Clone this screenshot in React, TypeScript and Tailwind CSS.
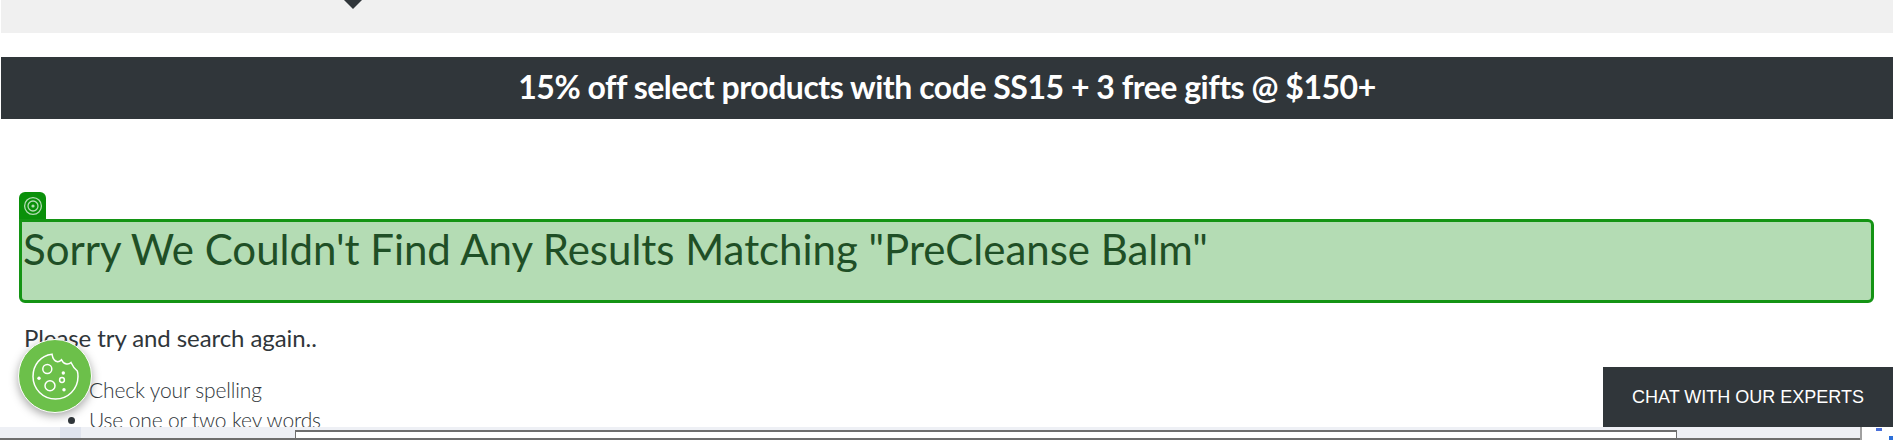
const CookieIcon = () => (
  <svg viewBox="0 0 54 54" className="w-[54px] h-[54px]" fill="none" stroke="white" strokeWidth="1.5">
    <path d="M24 5.2 C12.5 6.5 5 16 5 27.5 C5 40 15 50 27.5 50 C40 50 50 40 50 27.5 C50 25.5 49.8 23.6 49.3 22 Q45.5 19 43 13.5 Q41 15.5 38.5 15 Q35 14.5 33.5 10.8 Q31.5 13 29.5 12.8 Q25 12 24 5.2 Z" />
    <circle cx="19.3" cy="20" r="4.5" />
    <circle cx="22" cy="36.7" r="5" />
    <circle cx="34" cy="31" r="2.4" />
    <circle cx="35.3" cy="24" r="1.7" fill="white" stroke="none" />
    <circle cx="11" cy="29.3" r="1.7" fill="white" stroke="none" />
    <circle cx="36" cy="40.7" r="1.7" fill="white" stroke="none" />
  </svg>
);

const TargetIcon = () => (
  <svg viewBox="0 0 20 20" className="w-[20px] h-[20px]" fill="none" stroke="#b4dcb4" strokeWidth="1.3">
    <circle cx="10" cy="10" r="8.4" />
    <circle cx="10" cy="10" r="5" />
    <circle cx="10" cy="10" r="1.6" fill="#b4dcb4" stroke="none" />
  </svg>
);

export default function App() {
  return (
    <div className="relative w-[1893px] h-[440px] overflow-hidden bg-white font-['Lato','Open_Sans',sans-serif] text-[#30363a]">
      {/* Top grey nav strip */}
      <div className="h-[33px] ml-px bg-[#f0f0f0]">
        <div className="ml-[343px] w-0 h-0 border-x-[9px] border-x-transparent border-t-[9px] border-t-[#30363a]" />
      </div>

      {/* Promo banner */}
      <div className="mt-[24px] ml-px h-[62px] bg-[#30363a] flex items-center justify-center pb-[2px]">
        <p className="text-white text-[32px] font-bold tracking-[-0.48px]">15% off select products with code SS15 + 3 free gifts @ $150+</p>
      </div>

      {/* Results */}
      <div className="pt-[73px] px-[19px]">
        <div className="w-[27px] h-[27px] bg-[#0a900a] rounded-t-[6px] flex items-center justify-center">
          <TargetIcon />
        </div>
        <div className="h-[84px] bg-[#b4dcb4] border-[3px] border-[#149414] rounded-[6px] rounded-tl-none pl-[1px]">
          <h1 className="text-[#1f4f26] text-[42px] leading-[56px] -mt-[1px] tracking-[-0.02px]">Sorry We Couldn't Find Any Results Matching "PreCleanse Balm"</h1>
        </div>
        <p className="mt-[20px] ml-[5px] text-[24px] leading-[30px] tracking-[-0.08px]">Please try and search again..</p>
        <ul className="mt-[22px] ml-[70px] list-disc text-[21px] leading-[30px] font-light tracking-[-0.15px]">
          <li>Check your spelling</li>
          <li>Use one or two key words</li>
        </ul>
      </div>

      {/* Cookie settings button */}
      <div className="absolute left-[18px] top-[339px] w-[74px] h-[74px] rounded-full bg-[#6cc04a] border border-white shadow-[0_3px_10px_rgba(0,0,0,0.35)] flex items-center justify-center">
        <CookieIcon />
      </div>

      {/* Chat button */}
      <div className="absolute right-0 top-[367px] w-[290px] h-[60px] bg-[#30363a] flex items-center pl-[29px] font-['Liberation_Sans',sans-serif] text-white text-[18px]">
        CHAT WITH OUR EXPERTS
      </div>

      {/* Browser scrollbar strip */}
      <div className="absolute left-0 right-0 bottom-0 h-[13px] flex bg-[#eef0f5] border-b-2 border-b-[#6e6e6e]">
        <div className="w-[60px]" />
        <div className="w-[21px] bg-[#e0e4ee]" />
        <div className="w-[214px]" />
        <div className="w-[1382px] mt-[3px] bg-white border-t-2 border-x border-[#6e6e6e]" />
        <div className="flex-1" />
        <div className="w-[33px] -mb-[2px] bg-white border-l-2 border-[#a0a0a0] flex justify-between">
          <div className="ml-[14px] mt-[1px] w-[6px] h-[3px] bg-[#4a6fd8]" />
          <div className="mt-[9px] w-[4px] h-[4px] bg-[#2b6fd8]" />
        </div>
      </div>
    </div>
  );
}
